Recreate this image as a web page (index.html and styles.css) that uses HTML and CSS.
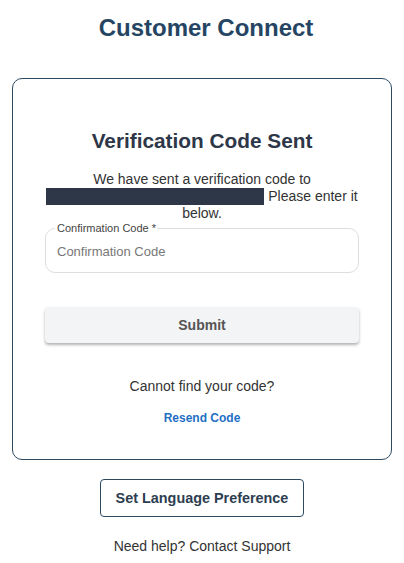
FILE: index.html
```html
<!DOCTYPE html>
<html lang="en">
<head>
  <meta charset="UTF-8" />
  <meta name="viewport" content="width=device-width, initial-scale=1.0"/>
  <title>Customer Connect - Verification</title>
  <link rel="stylesheet" href="styles.css">
</head>
<body>

<div class="page">
  <h1 class="brand">Customer Connect</h1>

  <div class="card">
    <h2>Verification Code Sent</h2>
    <p class="message">
      We have sent a verification code to
      <span class="redacted"></span>
      Please enter it below.
    </p>

    <fieldset class="field">
      <legend>Confirmation Code *</legend>
      <input type="text" placeholder="Confirmation Code">
    </fieldset>

    <button class="submit">Submit</button>

    <div class="resend">
      <p>Cannot find your code?</p>
      <a href="#">Resend Code</a>
    </div>
  </div>

  <button class="lang">Set Language Preference</button>

  <p class="help">Need help? Contact Support</p>
</div>

</body>
</html>
```

FILE: styles.css
```css
body {
  margin: 0;
  font-family: "Liberation Sans", Arial, sans-serif;
  background: white;
  color: #333;
}

.page {
  padding: 14px 12px 0;
  display: flex;
  flex-direction: column;
  align-items: center;
}

.brand {
  margin: 0 0 0 8px;
  font-size: 24px;
  line-height: 28px;
  color: #264563;
}

.card {
  box-sizing: border-box;
  width: 100%;
  margin-top: 36px;
  border: 1px solid #2d4a63;
  border-radius: 10px;
  padding: 50px 32px 33px;
  text-align: center;
}

h2 {
  margin: 0;
  font-size: 20.8px;
  line-height: 24px;
  color: #2d3748;
}

.message {
  margin: 18px 0 0;
  font-size: 14px;
  line-height: 17px;
  color: #333;
}

.redacted {
  display: inline-block;
  width: 218px;
  height: 17px;
  vertical-align: top;
  background: #2d3748;
}

.field {
  margin: 0;
  padding: 0 11px 3px;
  border: 1px solid #ddd;
  border-radius: 10px;
  text-align: left;
}

.field legend {
  padding: 0 2px;
  margin-left: -2px;
  font-size: 11px;
  line-height: 12px;
  color: #444;
}

.field input {
  width: 100%;
  height: 35px;
  padding: 0;
  border: none;
  outline: none;
  background: transparent;
  font-family: inherit;
  font-size: 13px;
  color: #333;
}

.field input::placeholder {
  color: #777;
}

.submit {
  display: block;
  width: 100%;
  height: 36px;
  margin-top: 34px;
  border: none;
  border-radius: 4px;
  background: #f3f4f6;
  box-shadow: 0 2px 3px rgba(0, 0, 0, 0.3);
  font-family: inherit;
  font-size: 14px;
  font-weight: bold;
  color: #555;
  cursor: pointer;
}

.resend {
  margin-top: 35px;
}

.resend p {
  margin: 0;
  font-size: 14px;
  line-height: 17px;
}

.resend a {
  display: inline-block;
  margin-top: 16px;
  font-size: 12px;
  line-height: 14px;
  font-weight: bold;
  color: #1f6fc5;
  text-decoration: none;
}

.lang {
  margin-top: 19px;
  height: 38px;
  padding: 0 15px;
  border: 1px solid #2d4a63;
  border-radius: 4px;
  background: white;
  font-family: inherit;
  font-size: 14.4px;
  font-weight: bold;
  color: #2d3e50;
  cursor: pointer;
}

.help {
  margin: 21px 0 0;
  font-size: 14px;
  line-height: 17px;
  color: #333;
}
```
